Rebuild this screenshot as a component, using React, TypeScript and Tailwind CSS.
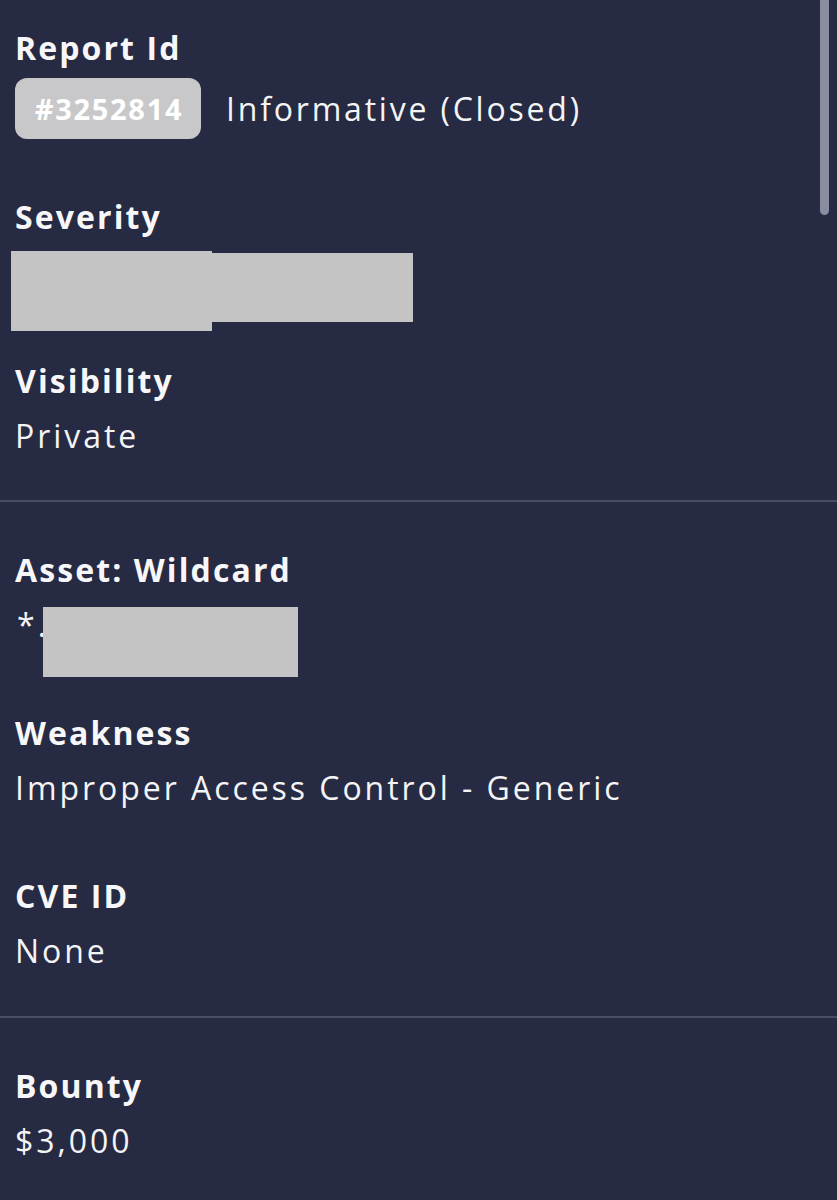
const font = { fontFamily: '"Open Sans", "Noto Sans", sans-serif' };

function Label({ children }: { children: React.ReactNode }) {
  return (
    <div className="h-[55px] text-[32px] leading-[55px] font-bold tracking-[2.1px] text-[#f7f7f9]">
      {children}
    </div>
  );
}

function Value({ children }: { children?: React.ReactNode }) {
  return (
    <div className="relative h-[55px] text-[32px] leading-[55px] font-medium tracking-[2.95px] text-[#f4f4f6]">
      {children}
    </div>
  );
}

export default function App() {
  return (
    <div className="relative min-h-[1200px] w-[837px] overflow-hidden bg-[#262a42]" style={font}>
      {/* scrollbar */}
      <div className="absolute right-[8px] top-0 h-[215px] w-[9px] rounded-b-full bg-[#8a8da0]" />

      {/* Section 1 */}
      <section className="px-[15px] pt-[20px] pb-[37px]">
        <Label>Report Id</Label>
        <div className="mt-[3px] flex h-[61px] items-center gap-[25px]">
          <span className="flex h-[61px] w-[186px] items-center justify-center rounded-[12px] bg-[#c8c8ca] pl-[2px] text-[29px] font-bold tracking-[1.7px] text-white">
            #3252814
          </span>
          <span className="text-[32px] font-medium tracking-[2.8px] text-[#f4f4f6]">Informative (Closed)</span>
        </div>

        <div className="mt-[50px]">
          <Label>Severity</Label>
          <Value>
            <div className="absolute left-[-4px] top-[7px] flex items-start">
              <div className="h-[80px] w-[201px] bg-[#c4c4c4]" />
              <div className="mt-[2px] h-[69px] w-[201px] bg-[#c4c4c4]" />
            </div>
          </Value>
        </div>

        <div className="mt-[54px]">
          <Label>Visibility</Label>
          <Value>Private</Value>
        </div>
      </section>

      <div className="h-[2px] bg-[#4a4e63]" />

      {/* Section 2 */}
      <section className="flex flex-col gap-[53px] px-[15px] pt-[40px] pb-[38px]">
        <div>
          <Label>Asset: Wildcard</Label>
          <Value>
            <span className="pl-[2px] tracking-[3px]">*.</span>
            <div className="absolute left-[28px] top-[10px] h-[70px] w-[255px] bg-[#c4c4c4]" />
          </Value>
        </div>
        <div>
          <Label>Weakness</Label>
          <Value>Improper Access Control - Generic</Value>
        </div>
        <div>
          <Label>CVE ID</Label>
          <Value>None</Value>
        </div>
      </section>

      <div className="h-[2px] bg-[#4a4e63]" />

      {/* Section 3 */}
      <section className="px-[15px] pt-[40px] pb-[30px]">
        <Label>Bounty</Label>
        <Value>$3,000</Value>
      </section>
    </div>
  );
}
